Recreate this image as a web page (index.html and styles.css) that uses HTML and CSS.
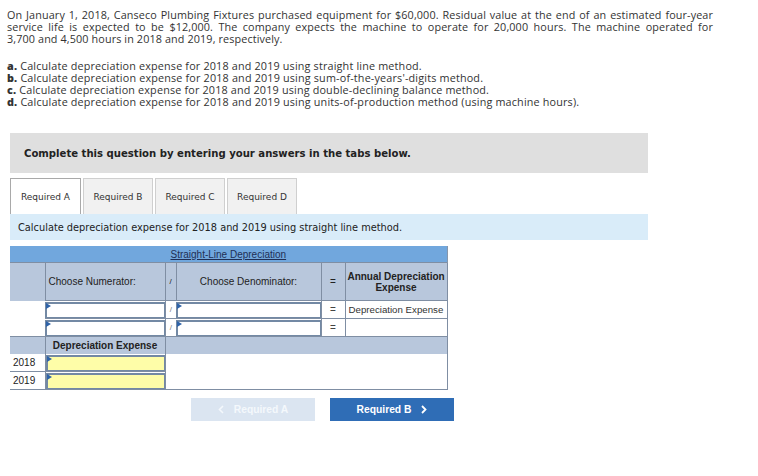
FILE: index.html
```html
<!DOCTYPE html>
<html>
<head>
<meta charset="utf-8">
<link rel="stylesheet" href="styles.css">
</head>
<body>
<div class="page">
  <p class="intro"><span class="ln">On January 1, 2018, Canseco Plumbing Fixtures purchased equipment for $60,000. Residual value at the end of an estimated four-year</span> <span class="ln">service life is expected to be $12,000. The company expects the machine to operate for 20,000 hours. The machine operated for</span> <span class="last">3,700 and 4,500 hours in 2018 and 2019, respectively.</span></p>
  <ul class="reqs">
    <li><b>a.</b> Calculate depreciation expense for 2018 and 2019 using straight line method.</li>
    <li><b>b.</b> Calculate depreciation expense for 2018 and 2019 using sum-of-the-years'-digits method.</li>
    <li><b>c.</b> Calculate depreciation expense for 2018 and 2019 using double-declining balance method.</li>
    <li><b>d.</b> Calculate depreciation expense for 2018 and 2019 using units-of-production method (using machine hours).</li>
  </ul>
  <div class="box">
    <div class="notice">Complete this question by entering your answers in the tabs below.</div>
    <div class="tabs">
      <div class="tab active">Required A</div>
      <div class="tab">Required B</div>
      <div class="tab">Required C</div>
      <div class="tab">Required D</div>
    </div>
    <div class="prompt">Calculate depreciation expense for 2018 and 2019 using straight line method.</div>
    <table class="grid">
      <colgroup>
        <col class="c0"><col class="c1"><col class="c2"><col class="c3"><col class="c4"><col class="c5">
      </colgroup>
      <tr class="title"><td colspan="6"><u>Straight-Line Depreciation</u></td></tr>
      <tr class="head">
        <td class="blank"></td>
        <td class="left">Choose Numerator:</td>
        <td class="op">/</td>
        <td>Choose Denominator:</td>
        <td class="op eq">=</td>
        <td class="bold">Annual Depreciation Expense</td>
      </tr>
      <tr class="row">
        <td class="empty"></td>
        <td class="inp"><div class="field"></div></td>
        <td class="op">/</td>
        <td class="inp"><div class="field"></div></td>
        <td class="op eq">=</td>
        <td class="txt">Depreciation Expense</td>
      </tr>
      <tr class="row">
        <td class="empty"></td>
        <td class="inp"><div class="field"></div></td>
        <td class="op">/</td>
        <td class="inp"><div class="field"></div></td>
        <td class="op eq">=</td>
        <td class="txt"></td>
      </tr>
      <tr class="sub">
        <td></td>
        <td class="subh">Depreciation Expense</td>
        <td colspan="4"></td>
      </tr>
      <tr class="yr">
        <td class="year">2018</td>
        <td class="inp"><div class="field yellow"></div></td>
        <td colspan="4" rowspan="2" class="rest"></td>
      </tr>
      <tr class="yr">
        <td class="year">2019</td>
        <td class="inp"><div class="field yellow"></div></td>
      </tr>
    </table>
    <div class="nav">
      <div class="btn prev"><svg class="chev" width="6" height="9" viewBox="0 0 6 9"><polyline points="5,1 1.5,4.5 5,8" fill="none" stroke="currentColor" stroke-width="1.6"/></svg><span>Required A</span></div>
      <div class="btn next"><span>Required B</span><svg class="chev" width="6" height="9" viewBox="0 0 6 9"><polyline points="1,1 4.5,4.5 1,8" fill="none" stroke="currentColor" stroke-width="1.8"/></svg></div>
    </div>
  </div>
</div>
</body>
</html>
```
FILE: styles.css
```css
html, body {
  margin: 0;
  padding: 0;
  background: #fff;
}
.page {
  padding: 9px 45px 0 7px;
  font-family: "Open Sans", "Liberation Sans", sans-serif;
  color: #333;
}
.intro {
  margin: 0;
  font-size: 10.8px;
  letter-spacing: 0.12px;
  line-height: 12px;
  text-align: justify;
}
.intro .ln {
  display: block;
  white-space: nowrap;
  text-align: justify;
  text-align-last: justify;
}
.intro .last { display: block; }
.reqs {
  list-style: none;
  margin: 15px 0 0 0;
  padding: 0;
  font-size: 10.8px;
  letter-spacing: 0.17px;
  line-height: 12px;
}
.reqs b { font-weight: 800; }
.box {
  margin-top: 25px;
  margin-left: 3px;
  width: 638px;
}
.notice {
  background: #dfdfdf;
  height: 40px;
  display: flex;
  align-items: center;
  padding-left: 14px;
  font-family: "DejaVu Sans", Verdana, sans-serif;
  font-weight: bold;
  font-size: 10.1px;
  color: #222;
}
.tabs {
  display: flex;
  gap: 2px;
  margin-top: 5px;
  height: 36px;
}
.tab {
  width: 68px;
  border: 1px solid #cfcfcf;
  border-bottom: none;
  background: #f1f1f1;
  display: flex;
  align-items: center;
  justify-content: center;
  font-family: "DejaVu Sans", Verdana, sans-serif;
  font-size: 9px;
  color: #333;
}
.tab.active {
  background: #fff;
  border-color: #a9a9a9;
  width: 69px;
}
.prompt {
  background: #d9ecf9;
  height: 26px;
  display: flex;
  align-items: center;
  padding-left: 8px;
  font-family: "DejaVu Sans", Verdana, sans-serif;
  font-size: 9.8px;
  color: #222;
}
.grid {
  margin-top: 6px;
  border-collapse: collapse;
  table-layout: fixed;
  width: 437px;
  font-family: "Liberation Sans", Arial, sans-serif;
  font-size: 10px;
  color: #222;
}
.c0 { width: 35px; }
.c1 { width: 120px; }
.c2 { width: 11px; }
.c3 { width: 145px; }
.c4 { width: 24px; }
.c5 { width: 102px; }
.grid td {
  padding: 0;
  text-align: center;
}
.title td {
  background: #71a7dd;
  height: 16px;
  font-size: 10px;
  color: #1f2f55;
  border-right: 1px solid #8796aa;
}
.head td {
  background: #b8c7dc;
  height: 37px;
  border-left: 1px solid #7f8ea3;
  border-top: 1px solid #7f8ea3;
}
.head td.blank { border-left: none; }
.head td.left { text-align: left; padding-left: 3px; }
.head td.bold { font-weight: bold; border-right: 1px solid #7f8ea3; line-height: 11px; }
.head td.op { font-size: 8px; }
.head td.eq { font-size: 10px; }
.row td {
  height: 17px;
  background: #fff;
  border-top: 1px solid #7f8ea3;
}
.row td.empty { border-top: none; }
.row td.op {
  border-left: 1px solid #7f8ea3;
  color: #777;
  font-size: 8px;
}
.row td.eq { font-size: 10px; color: #444; }
.row td.txt {
  text-align: left;
  padding-left: 3px;
  font-size: 9.7px;
  color: #333;
  border-left: 1px solid #7f8ea3;
  border-right: 1px solid #7f8ea3;
}
.inp { position: relative; }
.field {
  height: 13px;
  border: 2px solid #7389a4;
  border-right-width: 1px;
  border-bottom-width: 1px;
  background: #fff;
  position: relative;
}
.field::before {
  content: "";
  position: absolute;
  left: -1px;
  top: -1px;
  border-top: 3px solid transparent;
  border-bottom: 3px solid transparent;
  border-left: 5px solid #2f63a8;
}
.field.yellow { background: #fefda8; }
.sub td {
  background: #b8c7dc;
  height: 17px;
  border-top: 1px solid #7f8ea3;
  border-right: 1px solid #7f8ea3;
}
.sub td.subh { font-weight: bold; border-left: 1px solid #7f8ea3; }
.yr td {
  height: 17px;
  border-bottom: 1px solid #7f8ea3;
}
.yr td.year {
  text-align: left;
  padding-left: 3px;
}
.yr td.inp { border-left: 1px solid #7f8ea3; }
.yr td.rest {
  border-left: 1px solid #7f8ea3;
  border-right: 1px solid #7f8ea3;
  background: #fff;
}
.nav {
  display: flex;
  gap: 15px;
  margin-top: 8px;
  padding-left: 181px;
}
.btn {
  width: 124px;
  height: 23px;
  display: flex;
  align-items: center;
  justify-content: center;
  gap: 10px;
  font-family: "Liberation Sans", Arial, sans-serif;
  font-weight: bold;
  font-size: 10.3px;
  color: #fff;
}
.prev { background: #dbe5f1; color: #f4f8fc; }
.next { background: #2f6db6; }
```
